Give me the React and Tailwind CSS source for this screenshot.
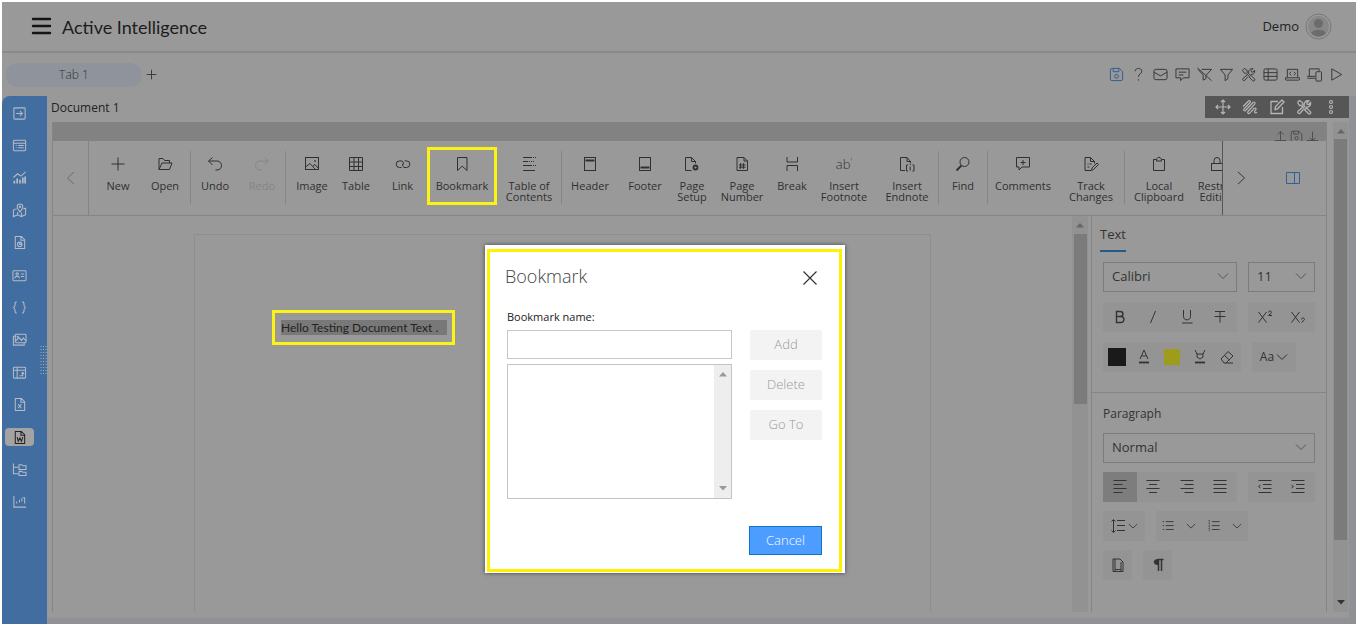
import React, { useState } from 'react';

const Icon = ({ size = 16, sw = 1, className = "", children }) => (
    <svg
        width={size}
        height={size}
        viewBox="0 0 16 16"
        fill="none"
        stroke="currentColor"
        strokeWidth={sw}
        className={`shrink-0 ${className}`}
        aria-hidden="true"
    >
        {children}
    </svg>
);

const Chevron = ({ className = "" }) => (
    <svg width="12" height="8" viewBox="0 0 12 8" fill="none" stroke="currentColor" className={`shrink-0 ${className}`} aria-hidden="true">
        <path d="M1 1.500l5 5 5-5" />
    </svg>
);

const Triangle = ({ down = false, className = "" }) => (
    <svg width="8" height="5" viewBox="0 0 8 5" fill="currentColor" className={`shrink-0 ${className}`} aria-hidden="true">
        <path d={down ? "M0 0h8L4 4.500z" : "M0 4.500h8L4 0z"} />
    </svg>
);

const icons = {
    tools: <><path d="M1.500 3.500l2-2 3 2v1.800l3 3M1.500 3.500l2 3h1.800l3 3" /><path d="M9.500 9.800l1-1 4 4c.8 1.200-.7 2.700-1.900 1.900l-4-4z" /><path d="M8.200 6.500c-.6-3 1.800-5.300 4.600-4.700l-2 2 .3 1.400 1.500.3 2-2c.5 2.800-1.800 5-4.300 4.500M7 8L2 12.300c-1 1.300.8 3 2 1.900l3.500-4" /></>,
    save: <><path d="M3.500 1.500h7.500l3.500 3.500v8a1.500 1.500 0 0 1-1.500 1.500H3a1.500 1.500 0 0 1-1.500-1.500V3.500a2 2 0 0 1 2-2z" /><path d="M4.500 1.500v3.500h6v-3.500" /><circle cx="8" cy="10" r="2" /></>,
};

// top right action strip
const topActions = [
    { name: "Help", icon: <><path d="M4.500 4.500c0-4 7-4 7 0C11.500 7.500 8 7 8 10.500" /><path d="M8 13v1.500" /></> },
    { name: "Mail", icon: <><rect x="1" y="2.500" width="14" height="11" rx="2" /><path d="M1 5.500L8 9.500l7-4" /></> },
    { name: "Comment", icon: <><path d="M1 2h14v9.500H9l-3 3v-3H1z" /><path d="M4 5.500h8M4 8.500h5" /></> },
    { name: "Clear filter", icon: <path d="M5 2.500h10.500L9.500 9v3.500L6.500 14V8.500L1 2.500M.5 1l15 13.500" /> },
    { name: "Filter", icon: <path d="M1.500 2.500h13L9.500 8.500v4L6.500 14.500v-6z" /> },
    { name: "Tools", icon: icons.tools },
    { name: "Grid", icon: <><rect x="1" y="2" width="14" height="12" rx="1.500" /><path d="M1 6h14M1 10h14M5.500 2v12" /></> },
    { name: "Code", icon: <><path d="M2.500 11V2.500h11v8.500M.5 11.500h15v1.500a1 1 0 0 1-1 1h-13a1 1 0 0 1-1-1z" /><path d="M6.500 5L4.800 7l1.700 2M9.500 5l1.700 2-1.700 2" /></> },
    { name: "Devices", icon: <><path d="M2.500 9.500V2h10.500v2M0 10h8.500M.5 12h8" /><rect x="9.500" y="5" width="6" height="10" rx="1" /></> },
    { name: "Run", icon: <path d="M3 2l10.500 6L3 14z" /> },
];

const file = <path d="M3.500 1.500h6.500l3.500 3.500v9.500h-10zM9.500 1.500V5.500h4" />;

const sideItems = [
    { name: "Export", icon: <><rect x="2" y="2" width="12" height="12" rx="1" /><path d="M4.500 8h6.500M8.500 5.500L11 8l-2.500 2.500" /></> },
    { name: "Form", icon: <><rect x="1.500" y="2.500" width="13" height="11" rx="1" /><path d="M1.500 5.500h13M4 8h1M6.500 8h6M4 10.500h1M6.500 10.500h6" /></> },
    { name: "Chart", icon: <><path d="M1.500 8L6 4l3.500 2.500L14.500 2" /><path d="M2.500 14.500v-3M5.500 14.500V9M8.500 14.500v-4M11.500 14.500V8M14 14.500V7" strokeWidth="1.800" /></> },
    { name: "Map", icon: <><path d="M5 6L1.500 7.500v7L6 12.500l4 2 4.500-2v-7L12 6.500M6 9.500v3M10 10v4.500" /><path d="M8.500 9.500C6.500 7 5.500 5.500 5.500 4a3 3 0 0 1 6 0c0 1.500-1 3-3 5.500z" /><circle cx="8.500" cy="4" r=".7" /></> },
    { name: "Report", icon: <>{file}<circle cx="8.200" cy="10" r="2.400" /><path d="M8.200 7.600V10h2.400" /></> },
    { name: "Card", icon: <><rect x="1" y="3" width="14" height="10.500" rx="1" /><circle cx="5.500" cy="6.500" r="1.300" /><path d="M3 11c0-3 5-3 5 0M9.500 6.500H13M9.500 9H13" /></> },
    { name: "Braces", icon: <path d="M5 2C2.500 2 3.500 5 3 6.500 2.700 7.500 1.800 8 1 8c.8 0 1.700.5 2 1.500C3.500 11 2.500 14 5 14M11 2c2.500 0 1.500 3 2 4.500.3 1 1.200 1.500 2 1.500-.8 0-1.700.5-2 1.500-.5 1.500.5 4.500-2 4.500" /> },
    { name: "Pictures", icon: <><rect x="3.500" y="2.500" width="11.500" height="9" rx="1" /><path d="M3.500 4.500H1.500v9.500h11.500v-2.500M4 9.500L7.500 6l2.500 3 2-2.500 3 3" /><circle cx="6" cy="5" r=".5" /></> },
    { name: "Pivot", icon: <><rect x="1.500" y="2.500" width="13" height="11.500" rx="1" /><path d="M1.500 5.500h13M5.500 2.500V14M8 11.500h3.500V8M10 9.200L11.500 8 13 9.200" /></> },
    { name: "Spreadsheet", icon: <>{file}<path d="M6.500 7.500l3.500 4.500M10 7.500L6.500 12" /></> },
    { name: "Word", icon: <>{file}<path d="M5.500 7.500l1.200 4.500L8.400 8.500l1.700 3.500 1.400-4.500" /></> },
    { name: "Folders", icon: <><path d="M1.500 1.500v11h5.500M1.500 5.500h5.500" /><path d="M7.500 3h3l1 1h3.500v4H7.500zM7.500 10h3l1 1h3.500v3.500H7.500z" /></> },
    { name: "Analytics", icon: <path d="M2 2v12h13M5 10V8M8 9V6M10.500 8V4.500M11.500 4h2V10" /> },
];

const ribbonGroups = [
    [
        { label: "New", w: "w-11", icon: <path d="M8 1.500v13M1.500 8h13" /> },
        { label: "Open", w: "w-[50px]", icon: <path d="M2 13.500V2.500h4l1.500 2h5v2.500M2 13.500L5 7h10l-2.500 6.500z" /> },
    ],
    [
        { label: "Undo", w: "w-12", icon: <path d="M5.500 1.500L1.500 5l4 4M1.500 5h8.500c6 0 6 9 0 9H8.500" /> },
        { label: "Redo", w: "w-[46px]", disabled: true, icon: <path d="M10.500 1.500L14.500 5l-4 4M14.500 5H6c-6 0-6 9 0 9h1.500" /> },
    ],
    [
        { label: "Image", w: "w-11", icon: <><rect x="1.500" y="1.500" width="13" height="12" /><path d="M1.500 11L6 7.500l5.500 6M9 10l2-1.500 3.500 4" /><circle cx="11" cy="5" r=".5" /></> },
        { label: "Table", w: "w-11", icon: <path d="M1.500 1.500h13v13h-13zM1.500 6h13M1.500 10.500h13M6 1.500v13M10.500 1.500v13" /> },
        { label: "Link", w: "w-[49px]", icon: <path d="M6.500 11.500H4.500a3.300 3.300 0 0 1 0-6.600H6c1.800 0 3 1.700 2.200 3.600M9.500 4.900h2a3.300 3.300 0 0 1 0 6.600H10c-1.800 0-3-1.700-2.200-3.600" /> },
        { label: "Bookmark", w: "w-[70px]", marked: true, icon: <path d="M3.500 1.500h9.500v13L8.200 10.200l-4.700 4.300z" /> },
        { label: "Table of Contents", w: "w-16", icon: <><path d="M2 1.500h9M2 5.500h5M2 9.500h9M2 14.500h12" /><path d="M12 1.500h3M8 5.500h6M12 9.500h3" strokeDasharray="1 1" /></> },
    ],
    [
        { label: "Header", w: "w-14", icon: <><rect x="2.500" y="1.500" width="11" height="13" /><path d="M3.500 4.500h9" strokeWidth="2" /></> },
        { label: "Footer", w: "w-[54px]", icon: <><rect x="2.500" y="1.500" width="11" height="13" /><path d="M3.500 11.500h9" strokeWidth="2" /></> },
        { label: "Page Setup", w: "w-10", icon: <><path d="M7.500 14.500h-6v-13h6l4 4v2M7.500 1.500v4h4" /><circle cx="11.500" cy="11.500" r="2" strokeWidth="1.800" /></> },
        { label: "Page Number", w: "w-[60px]", icon: <><path d="M3 1.500h7l3.500 3.500v9.500H3zM10 1.500V5h3.500" /><path d="M6.700 7l-.5 6M9.700 7l-.5 6M5 9h6.500M5 11.200h6.500" /></> },
        { label: "Break", w: "w-10", icon: <path d="M3 1v5h10.500V1M3 15V9.500h10.500V15" /> },
        { label: "Insert Footnote", w: "w-16", text: "ab" },
        { label: "Insert Endnote", w: "w-[62px]", icon: <path d="M6 14.500H1.500v-13h6.500l3.500 4v1.500M8 1.500v4h3.500M9 9H7.500v6H9M13.500 9H15v6h-1.500M11.200 7.500v1.500M11.200 10.500v4" /> },
    ],
    [
        { label: "Find", w: "w-12", icon: <><circle cx="9.500" cy="6" r="4.500" /><path d="M6.500 9.500L1.500 14.500" strokeWidth="1.800" /></> },
    ],
    [
        { label: "Comments", w: "w-[70px]", icon: <path d="M1.500 1.500h13v9.500H7l-3 3V11H1.500zM8 4v5M5.500 6.500h5" /> },
        { label: "Track Changes", w: "w-[66px]", icon: <><path d="M8 14.500H2v-13h5.500l4 4v2M7.500 1.500v4h4M4.500 8h1M6.500 8h2M4.500 11h2" /><path d="M8.500 14.500l.5-2.500 5-5 1.500 1.500-5 5z" /></> },
    ],
    [
        { label: "Local Clipboard", w: "w-[68px]", icon: <path d="M5.500 3.500h-3v11h11v-11h-3M5.500 5V3L8 1l2.500 2v2z" /> },
        { label: "Restrict Editing", w: "w-12", icon: <><rect x="2.500" y="7.500" width="11" height="7" /><path d="M5 7.500V4.500a3 3 0 0 1 6 0v3" /></> },
    ],
];

const alignIcons = [
    { name: "Align left", icon: <path d="M1.500 1.500h13M1.500 5.500h9M1.500 9.500h13M1.500 13.500h9" /> },
    { name: "Align center", icon: <path d="M1.500 1.500h13M4 5.500h8M1.500 9.500h13M4 13.500h8" /> },
    { name: "Align right", icon: <path d="M1.500 1.500h13M5.500 5.500h9M1.500 9.500h13M5.500 13.500h9" /> },
    { name: "Justify", icon: <path d="M1.500 1.500h13M1.500 5.500h13M1.500 9.500h13M1.500 13.500h13" /> },
];

const ToolButton = ({ name, active, className = "", children }) => (
    <button
        aria-label={name}
        className={`flex h-[30px] flex-1 items-center justify-center ${active ? "bg-[#7d7d7d]" : ""} ${className}`}
    >
        {children}
    </button>
);

const SelectBox = ({ label, options, className = "" }) => (
    <div className={`relative ${className}`}>
        <select
            aria-label={label}
            className="h-[30px] w-full appearance-none border border-[#7c7c7c] bg-transparent pl-2 text-[13px] text-[#333]"
        >
            {options.map((o) => <option key={o}>{o}</option>)}
        </select>
        <Chevron className="pointer-events-none absolute top-2.5 right-2 text-[#555]" />
    </div>
);

const Header = () => (
    <header className="flex h-[51px] shrink-0 items-center border-b-2 border-[#8a8a8a] pr-6 pl-[29px]">
        <button aria-label="Menu" className="text-[#151515]">
            <svg width="21" height="20" viewBox="0 0 21 20" stroke="currentColor" strokeWidth="2.400" strokeLinecap="round" aria-hidden="true">
                <path d="M2 2h17M2 9h17M2 16h17" />
            </svg>
        </button>
        <h1 className="ml-2.5 text-lg text-[#1c1c1c] font-['Lato',sans-serif]">Active Intelligence</h1>
        <div className="ml-auto flex items-center gap-1.5">
            <span className="text-[13px] text-[#222]">Demo</span>
            <svg width="27" height="27" viewBox="0 0 27 27" aria-hidden="true">
                <circle cx="13.500" cy="13.500" r="12.500" fill="none" stroke="#777" />
                <circle cx="13.500" cy="13.500" r="10.500" fill="#878787" />
                <circle cx="13.500" cy="10.500" r="4.500" fill="#6c6c6c" />
                <path d="M6 20c2-4.500 13-4.500 15 0-4 4.500-11 4.500-15 0z" fill="#6c6c6c" />
            </svg>
        </div>
    </header>
);

const TabBar = () => (
    <div className="flex h-[43px] shrink-0 items-center pr-3 pl-1">
        <button className="h-6 w-[136px] rounded-xl bg-[#8f939b] text-xs font-light text-[#333]">Tab 1</button>
        <button aria-label="Add tab" className="ml-1 text-[#333]">
            <Icon size={11}><path d="M8 1v14M1 8h14" strokeWidth="1.300" /></Icon>
        </button>
        <div className="ml-auto flex items-center gap-[7px] text-[#333]">
            <button aria-label="Save" className="text-[#2c5a91]"><Icon size={15}>{icons.save}</Icon></button>
            {topActions.map((a) => (
                <button key={a.name} aria-label={a.name}>
                    <Icon size={15}>{a.icon}</Icon>
                </button>
            ))}
        </div>
    </div>
);

const Sidebar = ({ active, onSelect }) => (
    <nav className="relative w-[45px] shrink-0 rounded-tl-lg bg-[#426da0] pt-px">
        <div className="flex h-[421px] flex-col justify-between">
            {sideItems.map((item) => (
                <button
                    key={item.name}
                    aria-label={item.name}
                    onClick={() => onSelect(item.name)}
                    className="flex h-8 w-[35px] items-center justify-center"
                >
                    <span className={`flex h-[18px] w-[29px] items-center justify-center rounded ${active === item.name ? "bg-[#a3a3a3] text-[#222]" : "text-[#b4bcc6]"}`}>
                        <Icon size={15} sw={1.1}>{item.icon}</Icon>
                    </span>
                </button>
            ))}
        </div>
        {/* resize grip */}
        <svg width="7" height="30" viewBox="0 0 7 30" className="absolute right-0 top-[250px]" stroke="#a9aeb4" strokeDasharray="1 2" aria-hidden="true">
            <path d="M1 0v30M3.500 0v30M6 0v30" />
        </svg>
    </nav>
);

const Ribbon = () => (
    <div className="flex h-[75px] shrink-0 border-b border-[#858585]">
        <button aria-label="Scroll left" className="flex w-9 shrink-0 items-center justify-center border-r border-[#858585] text-[#666]">
            <Icon size={14}><path d="M11.500 1L4 8l7.500 7" /></Icon>
        </button>
        <div className="flex min-w-0 flex-1 overflow-hidden pt-2 pl-[7px]">
            {ribbonGroups.map((group, i) => (
                <div key={i} className="flex shrink-0">
                    {i > 0 && <div className="mt-0.5 h-[53px] w-px bg-[#858585]"></div>}
                    <div className={i === 2 ? "flex pl-1" : "flex"}>
                        {group.map((item) => (
                            <button
                                key={item.label}
                                disabled={item.disabled}
                                className={`relative flex shrink-0 flex-col items-center gap-2 pt-[7px] text-[11px] leading-[11px] ${item.w} ${item.disabled ? "text-[#868686]" : "text-[#303030]"}`}
                            >
                                {item.text
                                    ? <span className="h-4 text-[13px] leading-4 font-light text-[#333]">{item.text}<sup className="text-[9px]">'</sup></span>
                                    : <Icon>{item.icon}</Icon>}
                                <span className="px-0.5">{item.label}</span>
                                {item.marked && <span className="absolute inset-x-0 -top-0.5 h-[58px] border-3 border-[#fbf315]"></span>}
                            </button>
                        ))}
                    </div>
                </div>
            ))}
        </div>
        <div className="flex w-[104px] shrink-0 items-center border-l border-[#555]">
            <button aria-label="Scroll right" className="flex w-9 justify-center text-[#333]">
                <Icon size={14} sw={1.1}><path d="M4.500 1l7.500 7-7.500 7" /></Icon>
            </button>
            <button aria-label="Toggle panel" className="ml-[26px] text-[#335f99]">
                <Icon><path d="M1.500 2.500h13v11h-13zM9.500 2.500v11" /></Icon>
            </button>
        </div>
    </div>
);

const PropertiesPanel = () => (
    <aside className="w-[235px] shrink-0 border-l border-[#858585] text-[#333]">
        <div className="border-b border-[#858585] pb-5">
            <button className="ml-2 block h-9 border-b-2 border-[#245b85] text-[13px] leading-9">Text</button>
            <div className="mt-2.5 flex flex-col gap-2.5 px-[11px]">
                <div className="flex gap-[11px]">
                    <SelectBox label="Font" options={["Calibri", "Arial"]} className="w-[134px]" />
                    <SelectBox label="Font size" options={["11", "12"]} className="flex-1" />
                </div>
                <div className="flex gap-[11px]">
                    <div className="flex w-[134px] bg-[#949494]">
                        <ToolButton name="Bold"><Icon sw={1.4}><path d="M4.500 2.500h3.500c4 0 4 5 0 5h-3.500zM4.500 7.500h4c4.500 0 4.500 6 0 6H4.500z" /></Icon></ToolButton>
                        <ToolButton name="Italic"><Icon><path d="M10.500 2L5.500 14" /></Icon></ToolButton>
                        <ToolButton name="Underline"><Icon><path d="M4.500 1v6.500c0 4.500 7 4.500 7 0V1M3 14h10.500" /></Icon></ToolButton>
                        <ToolButton name="Strikethrough"><Icon><path d="M3 2.500h10M8 2.500v11M2.500 7.500h11" /></Icon></ToolButton>
                    </div>
                    <div className="flex flex-1 bg-[#949494]">
                        <ToolButton name="Superscript"><Icon><path d="M1.500 3l8 10.500M9.500 3l-8 10.500M11.500 3.500c0-2 3-2 3 0 0 1-3 2.500-3 3h3.500" /></Icon></ToolButton>
                        <ToolButton name="Subscript"><Icon><path d="M1.500 3l8 10.500M9.500 3l-8 10.500M11.500 10.500c0-2 3-2 3 0 0 1-3 2.500-3 3" /></Icon></ToolButton>
                    </div>
                </div>
                <div className="flex gap-[11px]">
                    <div className="flex w-[138px] bg-[#949494]">
                        <ToolButton name="Font color"><span className="h-[18px] w-[18px] bg-[#1a1a1a]"></span></ToolButton>
                        <ToolButton name="Text color"><Icon><path d="M4 10L8 1l4 9M5.500 7h5" /><path d="M3 13.500h10" strokeWidth="1.800" /></Icon></ToolButton>
                        <ToolButton name="Highlight color"><span className="h-4 w-4 bg-[#9d9c1b]"></span></ToolButton>
                        <ToolButton name="Highlight"><Icon><path d="M3 1l2 4v3l3 2 3-2V5l2-4M5 5h6" /><path d="M3 13.500h10" strokeWidth="1.800" /></Icon></ToolButton>
                        <ToolButton name="Clear format"><Icon><path d="M2 10l7-7.500 5 4.500-7 7H5zM5.500 6.500l5 4.500M7 14h7" /></Icon></ToolButton>
                    </div>
                    <button className="flex w-11 items-center justify-center gap-0.5 bg-[#949494] text-xs">
                        Aa <Chevron />
                    </button>
                </div>
            </div>
        </div>
        <div className="flex flex-col gap-[9px] px-[11px]">
            <h2 className="mt-2.5 h-[21px] text-xs leading-[21px]">Paragraph</h2>
            <SelectBox label="Style" options={["Normal", "Heading 1"]} />
            <div className="flex gap-[11px]">
                <div className="flex w-[134px] bg-[#949494]">
                    {alignIcons.map((a, i) => (
                        <ToolButton key={a.name} name={a.name} active={i === 0}><Icon>{a.icon}</Icon></ToolButton>
                    ))}
                </div>
                <div className="flex flex-1 bg-[#949494]">
                    <ToolButton name="Decrease indent"><Icon><path d="M1.500 1.500h13M6 5.500h8.500M6 9.500h8.500M1.500 13.500h13M3.500 6L1.500 7.500l2 1.500" /></Icon></ToolButton>
                    <ToolButton name="Increase indent"><Icon><path d="M1.500 1.500h13M6 5.500h8.500M6 9.500h8.500M1.500 13.500h13M1.500 6l2 1.500-2 1.500" /></Icon></ToolButton>
                </div>
            </div>
            <div className="flex gap-[11px]">
                <ToolButton name="Line spacing" className="max-w-[42px] gap-0.5 bg-[#949494]">
                    <Icon><path d="M3.500 2v12M1.500 3.500L3.500 1.500l2 2M1.500 12.500l2 2 2-2M7 2.500h8M7 7.500h8M7 12.500h8" /></Icon>
                    <Chevron className="h-2 w-2.5" />
                </ToolButton>
                <div className="flex w-[92px] bg-[#949494]">
                    <ToolButton name="Bullets"><Icon size={14}><path d="M2 3h1.500M2 7.500h1.500M2 12h1.500M5.500 3h9M5.500 7.500h9M5.500 12h9" /></Icon></ToolButton>
                    <ToolButton name="Bullet styles"><Chevron className="h-2 w-2.5" /></ToolButton>
                    <ToolButton name="Numbering"><Icon size={14}><path d="M2.500 1v13" strokeDasharray="2 1" /><path d="M5.500 3h9M5.500 7.500h9M5.500 12h9" /></Icon></ToolButton>
                    <ToolButton name="Numbering styles"><Chevron className="h-2 w-2.5" /></ToolButton>
                </div>
            </div>
            <div className="flex gap-[11px]">
                <ToolButton name="Borders" className="max-w-[29px] bg-[#949494]"><Icon><path d="M3 2h7l3 3v9.500H3zM5 2v12M11 5v9M5 12.500h6" /></Icon></ToolButton>
                <ToolButton name="Show marks" className="max-w-[29px] bg-[#949494]">
                    <Icon><path d="M8 2.500C3 2 3 8 8 7.500z" fill="currentColor" /><path d="M8.500 14V2.500h5M11.500 2.500V14" strokeWidth="1.500" /></Icon>
                </ToolButton>
            </div>
        </div>
    </aside>
);

const BookmarkDialog = ({ onClose }) => {
    const [name, setName] = useState("");

    return (
        <div
            role="dialog"
            aria-labelledby="bookmark-title"
            className="absolute top-[245px] left-[485px] w-[360px] bg-white pt-1 pr-[3px] pb-px pl-0.5 shadow-[0_0_4px_#444]"
        >
            <div className="border-3 border-[#fff200] px-[17px] pt-3 pb-[14px]">
                <div className="-ml-0.5 flex h-6 items-center justify-between">
                    <h2 id="bookmark-title" className="text-lg font-light text-[#444]">Bookmark</h2>
                    <button aria-label="Close" onClick={onClose} className="mt-1 mr-1 text-[#333]">
                        <Icon><path d="M1.500 1.500l13 13M14.500 1.500l-13 13" strokeWidth="1.200" /></Icon>
                    </button>
                </div>
                <label htmlFor="bookmark-name" className="mt-[21px] block h-[21px] text-[11px] leading-4 text-[#222]">Bookmark name:</label>
                <div className="flex gap-[18px]">
                    <div className="min-w-0 flex-1">
                        <input
                            id="bookmark-name"
                            value={name}
                            onChange={(e) => setName(e.target.value)}
                            className="block h-[29px] w-full border border-[#c4c8c8] px-2 text-xs outline-none"
                        />
                        <div role="listbox" aria-label="Bookmarks" className="mt-[5px] flex h-[135px] justify-end border border-[#c4c4c4]">
                            <div className="flex w-[17px] flex-col items-center justify-between bg-[#eee] py-[7px] text-[#999]">
                                <Triangle />
                                <Triangle down />
                            </div>
                        </div>
                    </div>
                    <div className="flex w-[72px] flex-col gap-2.5 text-[13px] font-light text-[#999]">
                        <button disabled className="h-[30px] rounded-xs bg-[#f3f3f3]">Add</button>
                        <button disabled className="h-[30px] rounded-xs bg-[#f3f3f3]">Delete</button>
                        <button disabled className="h-[30px] rounded-xs bg-[#f3f3f3]">Go To</button>
                    </div>
                </div>
                <div className="mt-[27px] flex justify-end">
                    <button onClick={onClose} className="h-[29px] w-[73px] border border-[#0f73c6] bg-[#4d9cff] text-[13px] font-light text-white">Cancel</button>
                </div>
            </div>
        </div>
    );
};

const App = () => {
    const [active, setActive] = useState("Word");
    const [open, setOpen] = useState(true);

    return (
        <div className="relative h-screen overflow-hidden bg-white p-0.5 font-['Open_Sans',sans-serif]">
            <div className="flex h-full flex-col bg-[#999]">
                <Header />
                <TabBar />
                <div className="flex min-h-0 flex-1">
                    <Sidebar active={active} onSelect={setActive} />
                    <main className="flex min-w-0 flex-1 flex-col border-r-7 border-b-6 border-[#8f9194]">
                        <div className="flex h-[26px] shrink-0 items-start justify-between pl-1">
                            <h2 className="text-xs leading-6 text-[#222]">Document 1</h2>
                            <div className="flex h-[22px] w-36 items-center justify-around bg-[#565656] px-1 text-[#b5b5b5]">
                                <button aria-label="Move"><Icon sw={1.2}><path d="M8 1v14M1 8h14M6 3l2-2 2 2M6 13l2 2 2-2M3 6L1 8l2 2M13 6l2 2-2 2" /></Icon></button>
                                <button aria-label="Draw"><Icon sw={1.2}><path d="M1 7.500L6.500 2c1.200-1 2.600.3 1.600 1.500L2 10c-1 1.300.5 2.600 1.600 1.500L11 3.500c1.300-1.200 2.800.3 1.700 1.600L6 12.500c-1 1.400.6 2.800 1.800 1.600L12 9.500c1.300-1.200 2.700.2 1.700 1.400l-1 1.200c-.8 1.400.8 2.400 2.300 1.200" /></Icon></button>
                                <button aria-label="Edit"><Icon sw={1.3}><path d="M9 2.500H2v12h11.500V8M6 10.500l.5-3L13 1l2 2-6.500 6.800z" /></Icon></button>
                                <button aria-label="Settings"><Icon sw={1.3}>{icons.tools}</Icon></button>
                                <button aria-label="More"><Icon sw={1.2}><circle cx="8" cy="3" r="1.500" /><circle cx="8" cy="8" r="1.500" /><circle cx="8" cy="13" r="1.500" /></Icon></button>
                            </div>
                        </div>
                        <div className="flex min-h-0 flex-1 pb-1.5 pl-[5px]">
                            <div className="flex min-w-0 flex-1 flex-col border-r border-l border-[#858585]">
                                <div className="flex h-[19px] shrink-0 items-start justify-end gap-[3px] overflow-hidden bg-[#828282] pt-2 pr-[7px] text-[#444]">
                                    <Icon size={13}><path d="M8 2v11M4.500 5.500L8 2l3.500 3.500M1 13h14" /></Icon>
                                    <Icon size={13}>{icons.save}</Icon>
                                    <Icon size={13}><path d="M8 2v11M4.500 9.500L8 13l3.500-3.500M1 13h14" /></Icon>
                                </div>
                                <Ribbon />
                                <div className="flex min-h-0 flex-1 overflow-hidden">
                                    <div className="flex min-w-0 flex-1 justify-center pt-[18px]">
                                        <div className="w-[737px] border border-b-0 border-[#8e8e8e] pt-[75px] pl-[77px]">
                                            <p className="flex w-max border-3 border-[#fbf315] py-[7px] pr-[5px] pl-1.5 text-xs leading-[15px] font-['Lato',sans-serif] text-[#222]">
                                                <span className="h-[15px] w-[166px] bg-[#787878]">Hello Testing Document Text .</span>
                                            </p>
                                        </div>
                                    </div>
                                    <div className="mr-[3px] flex w-4 shrink-0 flex-col items-center bg-[#929292] pt-[7px] text-[#666]">
                                        <Triangle />
                                        <div className="mt-1.5 h-[170px] w-[13px] bg-[#7b7b7b]"></div>
                                    </div>
                                    <PropertiesPanel />
                                </div>
                            </div>
                            <div className="mr-px ml-1.5 flex w-[15px] shrink-0 flex-col items-center bg-[#929292] pt-[7px] pb-[7px] text-[#666]">
                                <Triangle />
                                <div className="mt-[5px] h-[401px] w-[13px] bg-[#7b7b7b]"></div>
                                <Triangle down className="mt-auto text-[#333]" />
                            </div>
                        </div>
                    </main>
                </div>
            </div>
            {open && <BookmarkDialog onClose={() => setOpen(false)} />}
        </div>
    );
};

export default App;
